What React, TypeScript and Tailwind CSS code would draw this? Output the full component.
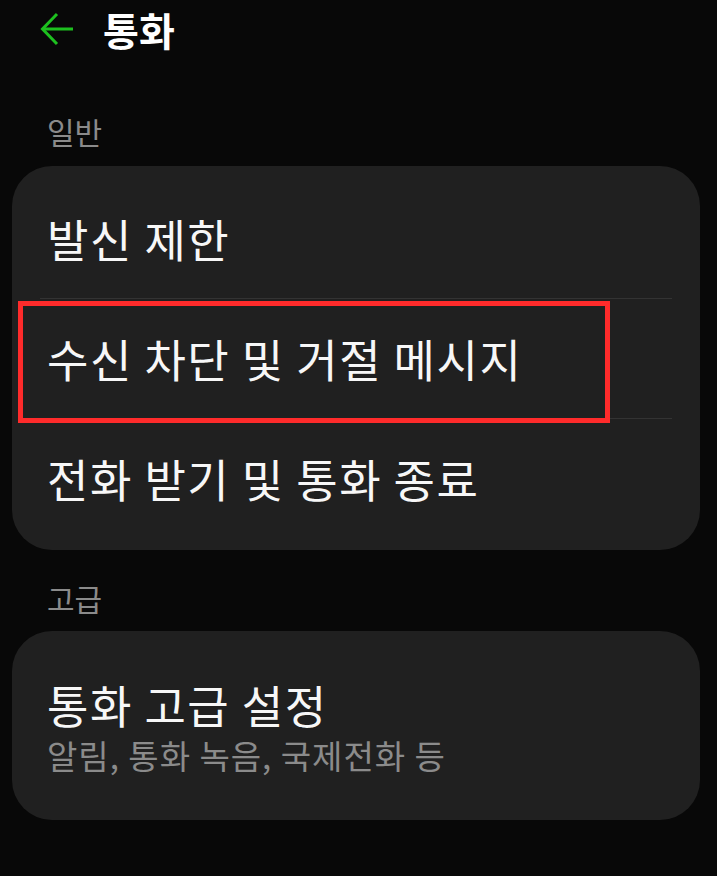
import React from 'react'

const font = { fontFamily: '"Noto Sans CJK KR", "Noto Sans", sans-serif' }

function Row({ label, divider }: { label: string; divider?: boolean }) {
  return (
    <div className="relative">
      {divider && <div className="absolute left-[28px] right-[28px] top-0 h-px bg-[#333333]" />}
      <div className="h-[120px] flex items-center pl-[35px] text-[45px] leading-none text-[#f7f7f7] tracking-[1.5px]">{label}</div>
    </div>
  )
}

export default function App() {
  return (
    <div className="min-h-screen w-[717px] bg-[#080808] overflow-hidden" style={font}>
      {/* Header */}
      <header className="h-[58px] flex items-center">
        <button className="ml-[38px] w-[38px] h-[38px] flex items-center justify-center">
          <svg width="36" height="36" viewBox="0 0 36 36" fill="none" stroke="#1dc01f" strokeWidth={3}>
            <path d="M34 18H4" />
            <path d="M18 3L3.5 18L18 33" />
          </svg>
        </button>
        <h1 className="ml-[27px] text-[39px] font-bold text-white leading-none">통화</h1>
      </header>

      {/* 일반 */}
      <div className="pt-[58px] pl-[47px] text-[30px] leading-none text-[#8b8b8b]">일반</div>
      <section className="relative mt-[20px] mx-[12px] w-[688px] rounded-[40px] bg-[#202020] py-[12px]">
        <Row label="발신 제한" />
        <Row label="수신 차단 및 거절 메시지" divider />
        <Row label="전화 받기 및 통화 종료" divider />
        {/* highlight box */}
        <div className="absolute left-[6px] top-[135px] w-[592px] h-[122px] border-[5px] border-[#ff2b2b]" />
      </section>

      {/* 고급 */}
      <div className="pt-[33px] pl-[47px] text-[30px] leading-none text-[#8b8b8b]">고급</div>
      <section className="mt-[18px] mx-[12px] w-[688px] h-[189px] rounded-[40px] bg-[#202020] flex flex-col justify-center pl-[35px]">
        <div className="text-[45px] leading-[58px] text-[#f7f7f7] tracking-[1.5px]">통화 고급 설정</div>
        <div className="text-[33px] leading-[42px] text-[#8b8b8b] tracking-[1px]">알림, 통화 녹음, 국제전화 등</div>
      </section>
    </div>
  )
}
